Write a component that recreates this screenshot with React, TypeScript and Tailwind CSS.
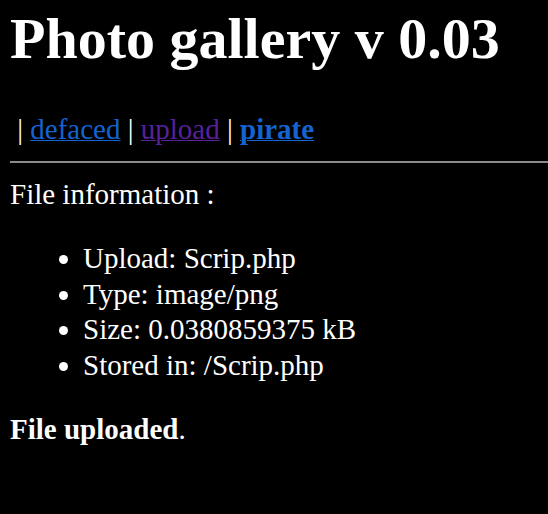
export default function App() {
  return (
    <div className="min-h-[514px] bg-black px-[10px] pt-[5px] text-white text-[29px] leading-[33px] [font-family:'Liberation_Serif','Times_New_Roman',serif]">
      <h1 className="m-0 text-[58px] leading-[67px] font-bold">Photo gallery v 0.03</h1>
      <p className="mt-[41px] whitespace-pre">
        {" | "}
        <a href="#" className="text-[#1463d0] underline decoration-1">defaced</a>
        {" | "}
        <a href="#" className="text-[#58209a] underline decoration-1">upload</a>
        {" | "}
        <a href="#" className="text-[#1463d0] underline decoration-1 font-bold">pirate</a>
      </p>
      <hr className="mt-[15px] mr-[-10px] border-0 border-t-2 border-[#8a8a8a]" />
      <p className="mt-[15px]">File information :</p>
      <ul className="mt-[30px] pl-[73px] list-disc leading-[35.7px]">
        <li>Upload: Scrip.php</li>
        <li>Type: image/png</li>
        <li>Size: 0.0380859375 kB</li>
        <li>Stored in: /Scrip.php</li>
      </ul>
      <p className="mt-[29px]">
        <b>File uploaded</b>.
      </p>
    </div>
  );
}
